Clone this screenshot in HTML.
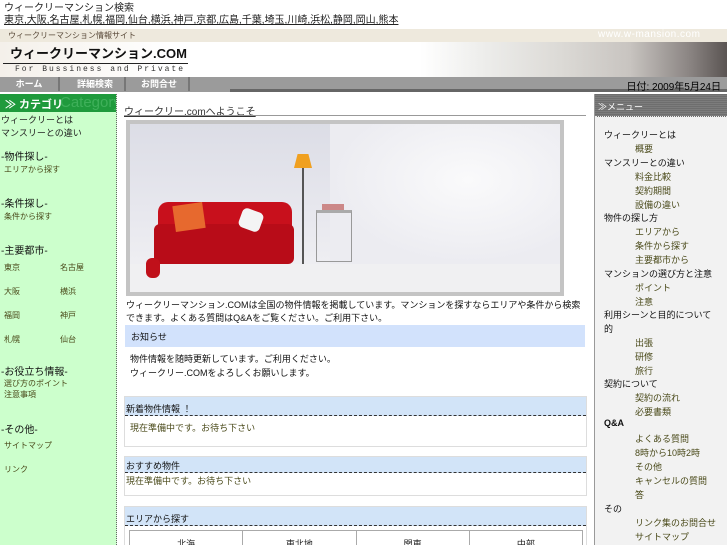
<!DOCTYPE html>
<html><head><meta charset="utf-8">
<style>
*{margin:0;padding:0;box-sizing:border-box}
html,body{width:727px;height:545px;overflow:hidden}
body{background:#fff;font-family:"Liberation Sans","Noto Sans CJK JP",sans-serif;font-size:10px;color:#222;position:relative}
.a{position:absolute;white-space:nowrap}
.ol{color:#4a4a1a}
.rs{position:absolute;left:604px;font-size:9px;color:#111;white-space:nowrap}
.rs.s{left:635px;color:#4a4a1a}
</style></head><body>
<div class="a" style="left:4px;top:3px;font-size:10px;line-height:12px">ウィークリーマンション検索</div>
<div class="a" style="left:4px;top:15px;font-size:10px;line-height:12px;text-decoration:underline">東京,大阪,名古屋,札幌,福岡,仙台,横浜,神戸,京都,広島,千葉,埼玉,川崎,浜松,静岡,岡山,熊本</div>
<!-- header -->
<div class="a" style="left:0;top:29px;width:727px;height:13px;background:#eee9dd"></div>
<div class="a" style="left:8px;top:30px;font-size:8px;color:#5a4a3a">ウィークリーマンション情報サイト</div>
<div class="a" style="left:0;top:42px;width:727px;height:35px;background:linear-gradient(90deg,#f4f0ea 0,#fff 170px,#fff 420px,#eeeeec 480px,#dcdad6 560px,#c8c4c0 630px,#8a8482 690px,#5a5452 727px)"></div>
<div class="a" style="left:598px;top:29px;font-size:10px;color:#fff;letter-spacing:.5px">www.w-mansion.com</div>
<div class="a" style="left:10px;top:46px;font-size:13px;font-weight:bold;color:#111;line-height:16px">ウィークリーマンション.COM</div>
<div class="a" style="left:3px;top:63px;width:185px;height:1px;background:#222"></div>
<div class="a" style="left:15px;top:65px;font-size:8px;letter-spacing:2px;color:#333;font-family:'Liberation Mono',monospace">For Bussiness and Private</div>
<!-- nav -->
<div class="a" style="left:0;top:77px;width:727px;height:15px;background:#9b9b9b"></div>
<div class="a" style="left:230px;top:89px;width:497px;height:3px;background:#666"></div>
<div class="a" style="left:0;top:77px;width:60px;height:14px;border-right:2px solid #777;color:#fff;font-size:9px;text-align:center;line-height:14px;font-weight:bold">ホーム</div>
<div class="a" style="left:66px;top:77px;width:60px;height:14px;border-right:2px solid #777;color:#fff;font-size:9px;text-align:center;line-height:14px;font-weight:bold">詳細検索</div>
<div class="a" style="left:130px;top:77px;width:60px;height:14px;border-right:2px solid #777;color:#fff;font-size:9px;text-align:center;line-height:14px;font-weight:bold">お問合せ</div>
<div class="a" style="right:6px;top:78px;font-size:10px;color:#000">日付: 2009年5月24日</div>
<!-- left -->
<div class="a" style="left:0;top:94px;width:117px;height:451px;background:#ccffcc;border-right:1px dotted #666"></div>
<div class="a" style="left:0;top:94px;width:116px;height:18px;background:#1f9a3c;overflow:hidden"><span style="position:absolute;left:60px;top:0;font-size:15px;color:#3fb05a">Category</span></div>
<div class="a" style="left:5px;top:96px;font-size:11px;color:#fff;font-weight:bold">≫ カテゴリ</div>
<div class="a" style="left:1px;top:114px;font-size:9px;line-height:13px;color:#222">ウィークリーとは<br>マンスリーとの違い</div>
<div class="a" style="left:1px;top:148px;font-size:10px;color:#111">-物件探し-</div>
<div class="a ol" style="left:4px;top:164px;font-size:8px">エリアから探す</div>
<div class="a" style="left:1px;top:195px;font-size:10px;color:#111">-条件探し-</div>
<div class="a ol" style="left:4px;top:211px;font-size:8px">条件から探す</div>
<div class="a" style="left:1px;top:242px;font-size:10px;color:#111">-主要都市-</div>
<div class="a ol" style="left:4px;top:256px;font-size:8px;line-height:24px">東京<br>大阪<br>福岡<br>札幌</div>
<div class="a ol" style="left:60px;top:256px;font-size:8px;line-height:24px">名古屋<br>横浜<br>神戸<br>仙台</div>
<div class="a" style="left:1px;top:363px;font-size:10px;color:#111">-お役立ち情報-</div>
<div class="a ol" style="left:4px;top:378px;font-size:8px;line-height:11px">選び方のポイント<br>注意事項</div>
<div class="a" style="left:1px;top:421px;font-size:10px;color:#111">-その他-</div>
<div class="a ol" style="left:4px;top:434px;font-size:8px;line-height:24px">サイトマップ<br>リンク</div>
<!-- main -->
<div class="a" style="left:124px;top:103px;font-size:10px;color:#333;text-decoration:underline">ウィークリー.comへようこそ</div>
<div class="a" style="left:124px;top:115px;width:462px;height:1px;background:#999"></div>
<div class="a" style="left:126px;top:120px;width:438px;height:176px;background:#c4c4c4;padding:4px">
 <div style="position:relative;width:430px;height:168px;background:linear-gradient(180deg,#dcdde6 0,#e9e9ef 60%,#f2f2f4 100%);overflow:hidden">
  <div style="position:absolute;left:200px;top:0;width:230px;height:140px;background:radial-gradient(ellipse at 60% 40%,#fafafb 0,#ececf1 70%)"></div>
  <div style="position:absolute;left:0;top:140px;width:430px;height:28px;background:#f0f0f2"></div>
  <div style="position:absolute;left:28px;top:78px;width:134px;height:42px;background:#c8101c;border-radius:10px 10px 4px 4px"></div>
  <div style="position:absolute;left:24px;top:100px;width:140px;height:40px;background:#b80c18;border-radius:6px"></div>
  <div style="position:absolute;left:44px;top:80px;width:30px;height:26px;background:#e7692e;transform:rotate(-8deg)"></div>
  <div style="position:absolute;left:110px;top:86px;width:22px;height:20px;background:#f4f4f4;border-radius:5px;transform:rotate(20deg)"></div>
  <div style="position:absolute;left:16px;top:134px;width:14px;height:20px;background:#c0101a;border-radius:6px"></div>
  <div style="position:absolute;left:164px;top:30px;width:18px;height:14px;background:#f0a020;clip-path:polygon(20% 0,80% 0,100% 100%,0 100%)"></div>
  <div style="position:absolute;left:172px;top:44px;width:2px;height:96px;background:#555"></div>
  <div style="position:absolute;left:186px;top:86px;width:36px;height:52px;border:1px solid #999;border-top:3px solid #aaa"></div>
  <div style="position:absolute;left:192px;top:80px;width:22px;height:6px;background:#c88"></div>
 </div>
</div>
<div class="a" style="left:126px;top:299px;width:460px;font-size:9px;line-height:13px;color:#111;white-space:normal">ウィークリーマンション.COMは全国の物件情報を掲載しています。マンションを探すならエリアや条件から検索できます。よくある質問はQ&Aをご覧ください。ご利用下さい。</div>
<div class="a" style="left:125px;top:325px;width:460px;height:22px;background:#d2e2fc"></div>
<div class="a" style="left:131px;top:330px;font-size:9px;color:#111">お知らせ</div>
<div class="a" style="left:130px;top:352px;font-size:9px;line-height:14px;color:#111">物件情報を随時更新しています。ご利用ください。<br>ウィークリー.COMをよろしくお願いします。</div>
<div class="a" style="left:124px;top:396px;width:463px;height:51px;border:1px solid #ddd;background:#fff"><div style="height:19px;background:#d2e4f8;border-bottom:1px dashed #333"></div></div>
<div class="a" style="left:126px;top:402px;font-size:9px;color:#111">新着物件情報 ！</div>
<div class="a ol" style="left:130px;top:421px;font-size:9px">現在準備中です。お待ち下さい</div>
<div class="a" style="left:124px;top:456px;width:463px;height:40px;border:1px solid #ddd;background:#fff"><div style="height:16px;background:#d2e4f8;border-bottom:1px dashed #333"></div></div>
<div class="a" style="left:126px;top:459px;font-size:9px;color:#111">おすすめ物件</div>
<div class="a ol" style="left:126px;top:474px;font-size:9px">現在準備中です。お待ち下さい</div>
<div class="a" style="left:124px;top:506px;width:463px;height:45px;border:1px solid #ddd;background:#fff"><div style="height:19px;background:#d2e4f8;border-bottom:1px dashed #333"></div></div>
<div class="a" style="left:126px;top:512px;font-size:9px;color:#111">エリアから探す</div>
<div class="a" style="left:129px;top:530px;width:454px;height:20px;border:1px solid #aaa;display:flex">
 <div style="flex:1;border-right:1px solid #aaa;text-align:center;font-size:9px;padding-top:6px">北海</div>
 <div style="flex:1;border-right:1px solid #aaa;text-align:center;font-size:9px;padding-top:6px">東北地</div>
 <div style="flex:1;border-right:1px solid #aaa;text-align:center;font-size:9px;padding-top:6px">関東</div>
 <div style="flex:1;text-align:center;font-size:9px;padding-top:6px">中部</div>
</div>
<div class="a" style="left:594px;top:94px;width:1px;height:451px;background:#999"></div>
<!-- right -->
<div class="a" style="left:595px;top:94px;width:132px;height:451px;background:#f2f2f2"></div>
<div class="a" style="left:595px;top:94px;width:132px;height:23px;background:repeating-linear-gradient(180deg,#6e6e6e 0,#6e6e6e 1px,#7c7c7c 1px,#7c7c7c 2px);border-bottom:1px dotted #eee"></div>
<div class="a" style="left:598px;top:100px;font-size:9px;color:#fff">≫メニュー</div>
<div class="rs" style="top:128px">ウィークリーとは</div>
<div class="rs s" style="top:142px">概要</div>
<div class="rs" style="top:156px">マンスリーとの違い</div>
<div class="rs s" style="top:170px">料金比較</div>
<div class="rs s" style="top:184px">契約期間</div>
<div class="rs s" style="top:198px">設備の違い</div>
<div class="rs" style="top:211px">物件の探し方</div>
<div class="rs s" style="top:225px">エリアから</div>
<div class="rs s" style="top:239px">条件から探す</div>
<div class="rs s" style="top:253px">主要都市から</div>
<div class="rs" style="top:267px">マンションの選び方と注意</div>
<div class="rs s" style="top:281px">ポイント</div>
<div class="rs s" style="top:295px">注意</div>
<div class="rs" style="top:308px">利用シーンと目的について</div>
<div class="rs" style="top:322px">的</div>
<div class="rs s" style="top:336px">出張</div>
<div class="rs s" style="top:350px">研修</div>
<div class="rs s" style="top:364px">旅行</div>
<div class="rs" style="top:377px">契約について</div>
<div class="rs s" style="top:391px">契約の流れ</div>
<div class="rs s" style="top:405px">必要書類</div>
<div class="rs" style="top:418px;font-weight:bold">Q&amp;A</div>
<div class="rs s" style="top:432px">よくある質問</div>
<div class="rs s" style="top:446px">8時から10時2時</div>
<div class="rs s" style="top:460px">その他</div>
<div class="rs s" style="top:474px">キャンセルの質問</div>
<div class="rs s" style="top:488px">答</div>
<div class="rs" style="top:502px">その</div>
<div class="rs s" style="top:516px">リンク集のお問合せ</div>
<div class="rs s" style="top:530px">サイトマップ</div>
</body></html>
